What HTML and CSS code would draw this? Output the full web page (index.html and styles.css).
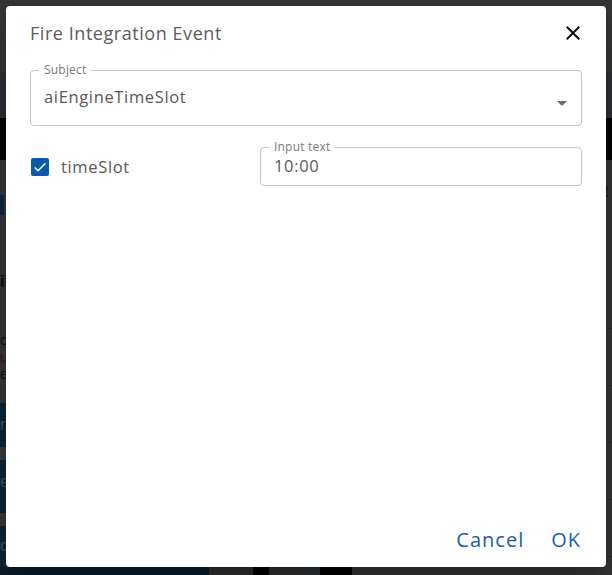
FILE: index.html
```html
<!DOCTYPE html>
<html lang="en">
<head>
<meta charset="utf-8">
<title>Fire Integration Event</title>
<link rel="stylesheet" href="styles.css">
</head>
<body>
<div class="page">
  <div class="topbar"></div>
  <div class="toolbar"></div>
  <div class="blackbar"></div>
  <div class="content">
    <div class="leftcol">
      <div class="marker"></div>
      <div class="heading">ii</div>
      <div class="line">oo</div>
      <div class="line red">uu</div>
      <div class="line">ee</div>
      <div class="navy h44">nn</div>
      <div class="sep"></div>
      <div class="navy h53">ea</div>
      <div class="sep"></div>
      <div class="navy grow">o</div>
    </div>
    <div class="rightcol">
      <div class="rt">t</div>
      <div class="rule r1"></div>
      <div class="rule"></div>
      <div class="rule"></div>
      <div class="rule"></div>
      <div class="rule"></div>
    </div>
  </div>
  <div class="bottomstrip">
    <span class="bs navy-s"></span><span class="bs gray-s w44"></span><span class="bs black-s w16"></span><span class="bs gray-s w24"></span><span class="bs gray2-s w27"></span><span class="bs black-s w32"></span>
  </div>
</div>

<div class="dialog" role="dialog">
  <div class="dialog-title">
    <h2>Fire Integration Event</h2>
    <button class="close" aria-label="close">
      <svg viewBox="0 0 24 24" width="24" height="24"><path d="M19 6.41 17.59 5 12 10.59 6.41 5 5 6.41 10.59 12 5 17.59 6.41 19 12 13.41 17.59 19 19 17.59 13.41 12z" fill="#111"/></svg>
    </button>
  </div>
  <div class="dialog-body">
    <fieldset class="field select">
      <legend>Subject</legend>
      <span class="value">aiEngineTimeSlot</span>
      <svg class="arrow" viewBox="0 0 24 24" width="24" height="24"><path d="M7 10l5 5 5-5z" fill="#6b6b6b"/></svg>
    </fieldset>
    <div class="row">
      <label class="check">
        <span class="box"><svg viewBox="0 0 24 24" width="18" height="18"><path d="M9 16.17 4.83 12l-1.42 1.41L9 19 21 7l-1.41-1.41z" fill="#fff"/></svg></span>
        <span class="check-label">timeSlot</span>
      </label>
      <fieldset class="field dense">
        <legend>Input text</legend>
        <span class="value">10:00</span>
      </fieldset>
    </div>
  </div>
  <div class="actions">
    <button class="btn">Cancel</button>
    <button class="btn">OK</button>
  </div>
</div>
</body>
</html>
```
FILE: styles.css
```css
* { box-sizing: border-box; }
html, body { margin: 0; padding: 0; }
body {
  width: 612px;
  height: 575px;
  overflow: hidden;
  background: #343434;
  font-family: "Open Sans", "Noto Sans", sans-serif;
  position: relative;
}
.page {
  display: flex;
  flex-direction: column;
  height: 575px;
}
.topbar { height: 71px; background: #343434; }
.toolbar { height: 47px; background: #2b2f33; border-top: 1px solid #233446; }
.blackbar { height: 42px; background: #050505; }
.content {
  flex: 1;
  display: flex;
  justify-content: space-between;
  font-family: "Liberation Sans", sans-serif;
  font-size: 16px;
  color: #111;
}
.leftcol {
  width: 209px;
  display: flex;
  flex-direction: column;
}
.marker { width: 4px; height: 20px; background: #10263a; margin-top: 35px; }
.heading { font-weight: bold; margin-top: 58px; height: 20px; color: #0b0b0b; }
.line { height: 17px; line-height: 17px; font-size: 15px; color: #151515; }
.heading + .line { margin-top: 38px; }
.line.red { color: #4a1010; }
.navy { background: #0e2334; color: #3f4f5c; font-size: 16px; line-height: 44px; }
.line + .navy { margin-top: 21px; }
.h44 { height: 44px; }
.h53 { height: 53px; }
.sep { height: 13px; background: #383838; }
.grow { flex: 1; line-height: 40px; }
.rightcol {
  width: 8px;
  display: flex;
  flex-direction: column;
}
.rt { margin-top: 22px; font-size: 16px; color: #151515; height: 20px; line-height: 20px; }
.rule { height: 1px; background: #2a2a2a; margin-top: 56px; }
.rule.r1 { margin-top: 126px; }
.bottomstrip {
  height: 8px;
  display: flex;
  margin-top: -8px;
}
.bs { display: block; height: 8px; }
.navy-s { width: 209px; background: #0b1d2b; }
.gray-s { background: #2e2e2e; }
.gray2-s { background: #2b2f33; }
.black-s { background: #030303; }
.w44 { width: 44px; }
.w16 { width: 16px; }
.w24 { width: 24px; }
.w27 { width: 27px; }
.w32 { width: 32px; }

/* Dialog */
.dialog {
  position: absolute;
  left: 6px;
  top: 6px;
  width: 600px;
  height: 561px;
  background: #fff;
  border-radius: 4px;
  box-shadow: 0 11px 15px -7px rgba(0,0,0,.2), 0 24px 38px 3px rgba(0,0,0,.14);
  display: flex;
  flex-direction: column;
  font-family: "Open Sans", "Noto Sans", sans-serif;
}
.dialog-title {
  display: flex;
  align-items: center;
  justify-content: space-between;
  padding: 0 21px 0 24px;
  height: 54px;
}
.dialog-title h2 {
  margin: 0;
  font-size: 18px;
  font-weight: 400;
  color: #5c5c5c;
  letter-spacing: 0.55px;
}
.close {
  border: 0;
  background: none;
  padding: 0;
  width: 24px;
  height: 24px;
  cursor: pointer;
}
.close svg { display: block; }
.dialog-body {
  padding: 4px 24px 0 24px;
  display: flex;
  flex-direction: column;
  gap: 15px;
}
.field {
  margin: 0;
  border: 1px solid #c4c4c4;
  border-radius: 4px;
  padding: 0 13px;
  display: block;
  min-width: 0;
  position: relative;
}
.field legend {
  font-size: 12px;
  color: #7a7a7a;
  padding: 0 5px;
  margin-left: -5px;
  line-height: 12px;
  letter-spacing: 0.2px;
}
.field .value {
  display: block;
  font-size: 16.5px;
  line-height: 24px;
  color: #585858;
  letter-spacing: 0.65px;
}
.select {
  height: 62px;
  padding-top: 9px;
}
.select .arrow {
  position: absolute;
  right: 7px;
  top: 15px;
}
.row {
  display: grid;
  grid-template-columns: 230px 1fr;
  align-items: end;
}
.check {
  display: flex;
  align-items: center;
  gap: 12px;
  height: 39px;
  padding-left: 1px;
}
.box {
  width: 18px;
  height: 18px;
  border-radius: 2px;
  background: #0b5aa8;
  display: flex;
  align-items: center;
  justify-content: center;
}
.box svg { width: 16px; height: 16px; }
.check-label {
  font-size: 16.5px;
  color: #585858;
  letter-spacing: 0.65px;
}
.dense {
  height: 45px;
  padding-top: 1px;
}
.actions {
  margin-top: auto;
  display: flex;
  justify-content: flex-end;
  gap: 11px;
  padding: 0 17px 8px 0;
}
.btn {
  border: 0;
  background: none;
  font-family: "Open Sans", "Noto Sans", sans-serif;
  font-size: 20px;
  color: #1a5ea6;
  padding: 6px 8px;
  cursor: pointer;
  letter-spacing: 1px;
}
```
